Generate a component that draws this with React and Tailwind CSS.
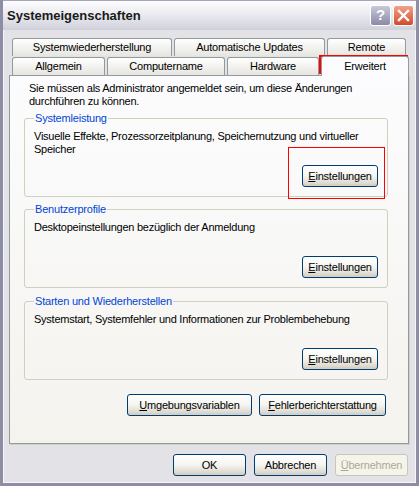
import React from 'react'

function XpButton({ children, w = 'w-[73px]', disabled = false }) {
  return (
    <button
      className={`${w} h-[22px] rounded-[3px] border text-[11px] leading-none tracking-[-0.2px] ${
        disabled
          ? 'border-[#c9c7ba] bg-[#f5f4ea] text-[#aca899]'
          : 'border-[#003c74] bg-gradient-to-b from-white via-[#f4f4f0] to-[#d6d0c5] text-black shadow-[inset_0_-2px_0_#d6d0c5]'
      }`}
    >
      {children}
    </button>
  )
}

function Tab({ children, w, selected = false }) {
  return (
    <div
      className={`${w} flex items-center justify-center border border-b-0 rounded-t-[3px] text-[11px] tracking-[-0.2px] ${
        selected
          ? 'h-[20px] -mb-px border-[#919b9c] bg-[#fcfcfe] relative z-10'
          : 'h-[18px] border-[#919b9c] bg-gradient-to-b from-white to-[#e6e5e0]'
      }`}
    >
      {children}
    </div>
  )
}

function GroupBox({ title, text, textH = 'h-[30px]' }) {
  return (
    <fieldset className="mx-[14px] w-[364px] rounded-[3px] border border-[#d0d0bf] px-[9px] pb-[9px]">
      <legend className="px-[1px] text-[11px] leading-[13px] tracking-[-0.2px] text-[#0046d5]">{title}</legend>
      <div className={`mt-[5px] ${textH} text-[11px] leading-[13px] tracking-[-0.25px] text-black`}>{text}</div>
      <div className="mt-[5px] flex justify-end">
        <XpButton w="w-[76px]">
          <u>E</u>instellungen
        </XpButton>
      </div>
    </fieldset>
  )
}

export default function App() {
  return (
    <div
      className="w-[419px] h-[486px] flex flex-col bg-[#e3e2e7] border-[3px] border-t-0 border-[#8d8da6] overflow-hidden"
      style={{ fontFamily: '"Liberation Sans", Arial, sans-serif' }}
    >
      {/* Title bar */}
      <div className="-mx-[3px] h-[30px] flex items-center px-[7px] bg-gradient-to-b from-[#fdfdfe] via-[#e9e9ef] to-[#cfd0da] border-t border-[#a5a5bb]">
        <span className="flex-1 text-[13px] font-bold text-[#1a1a1a]">Systemeigenschaften</span>
        <div className="flex gap-[2px] mr-[-2px]">
          <div className="w-[21px] h-[21px] rounded-[3px] border border-white bg-gradient-to-b from-[#c9c9db] to-[#8a8aa6] flex items-center justify-center text-white font-bold text-[15px]">
            ?
          </div>
          <div className="w-[21px] h-[21px] rounded-[3px] border border-white bg-gradient-to-b from-[#f2a08a] to-[#d2482a] flex items-center justify-center">
            <svg width="13" height="13" viewBox="0 0 13 13">
              <path d="M2 2 L11 11 M11 2 L2 11" stroke="white" strokeWidth="2.4" strokeLinecap="square" />
            </svg>
          </div>
        </div>
      </div>

      <div className="flex-1 border-l border-r border-b border-white/70 px-[5px] pt-[8px] relative">
        {/* Tabs */}
        <div className="flex gap-[2px] pl-[3px]">
          <Tab w="w-[160px]">Systemwiederherstellung</Tab>
          <Tab w="w-[151px]">Automatische Updates</Tab>
          <Tab w="w-[79px]">Remote</Tab>
        </div>
        <div className="flex gap-[2px] pl-[3px] items-end">
          <Tab w="w-[93px]">Allgemein</Tab>
          <Tab w="w-[118px]">Computername</Tab>
          <Tab w="w-[92px]">Hardware</Tab>
          <Tab w="w-[88px]" selected>
            Erweitert
          </Tab>
        </div>

        {/* Tab page */}
        <div className="w-[400px] h-[369px] border border-[#919b9c] bg-gradient-to-b from-[#fcfcfe] to-[#f4f3ee] shadow-[1px_1px_0_#d0cfc6] pt-[6px]">
          <p className="ml-[19px] text-[11px] leading-[13px] tracking-[-0.25px] text-black">
            Sie müssen als Administrator angemeldet sein, um diese Änderungen
            <br />
            durchführen zu können.
          </p>
          <div className="mt-[4px] flex flex-col gap-[6px]">
            <GroupBox
              title="Systemleistung"
              text={
                <>
                  Visuelle Effekte, Prozessorzeitplanung, Speichernutzung und virtueller
                  <br />
                  Speicher
                </>
              }
            />
            <GroupBox title="Benutzerprofile" text="Desktopeinstellungen bezüglich der Anmeldung" />
            <div className="mt-[1px]">
              <GroupBox title="Starten und Wiederherstellen" text="Systemstart, Systemfehler und Informationen zur Problembehebung" />
            </div>
          </div>
          <div className="mt-[14px] mr-[22px] flex justify-end gap-[7px]">
            <XpButton w="w-[125px]">
              <u>U</u>mgebungsvariablen
            </XpButton>
            <XpButton w="w-[127px]">
              <u>F</u>ehlerberichterstattung
            </XpButton>
          </div>
        </div>

        {/* Dialog buttons */}
        <div className="mt-[10px] flex justify-end gap-[8px] pr-[2px]">
          <XpButton>OK</XpButton>
          <XpButton>Abbrechen</XpButton>
          <XpButton disabled>
            <u>Ü</u>bernehmen
          </XpButton>
        </div>

        {/* Red annotation boxes */}
        <div className="absolute left-[315px] top-[25px] w-[89px] h-[19px] border-2 border-[#ff0000] pointer-events-none" />
        <div className="absolute left-[284px] top-[117px] w-[97px] h-[52px] border border-[#ff0000] pointer-events-none" />
      </div>
    </div>
  )
}
